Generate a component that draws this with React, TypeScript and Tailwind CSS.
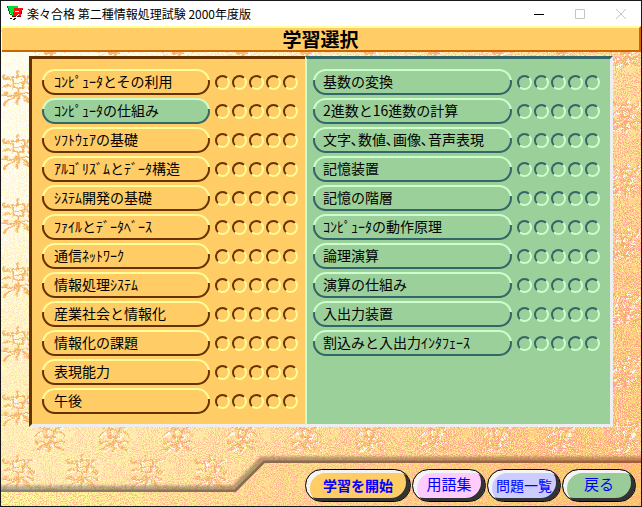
import React from 'react';
const chapters = ['ｺﾝﾋﾟｭｰﾀとその利用', 'ｺﾝﾋﾟｭｰﾀの仕組み', 'ｿﾌﾄｳｪｱの基礎', 'ｱﾙｺﾞﾘｽﾞﾑとﾃﾞｰﾀ構造', 'ｼｽﾃﾑ開発の基礎', 'ﾌｧｲﾙとﾃﾞｰﾀﾍﾞｰｽ', '通信ﾈｯﾄﾜｰｸ', '情報処理ｼｽﾃﾑ', '産業社会と情報化', '情報化の課題', '表現能力', '午後'];
const sections = ['基数の変換', '2進数と16進数の計算', '文字､数値､画像､音声表現', '記憶装置', '記憶の階層', 'ｺﾝﾋﾟｭｰﾀの動作原理', '論理演算', '演算の仕組み', '入出力装置', '割込みと入出力ｲﾝﾀﾌｪｰｽ'];
const pillStyles = {
  orange: '[background:linear-gradient(#ffcc66,#ffcc66)_padding-box,linear-gradient(#ffff99_42%,#663300_42%)_border-box]',
  green: '[background:linear-gradient(#9bd09b,#9bd09b)_padding-box,linear-gradient(#ccffcc_42%,#336666_42%)_border-box]'
};
const dotStyles = {
  orange: 'border-t-[#663300] border-l-[#663300] border-r-[#ffff99] border-b-[#ffff99]',
  green: 'border-t-[#336666] border-l-[#336666] border-r-[#ccffcc] border-b-[#ccffcc]'
};
const actions = [{
  label: '学習を開始',
  style: 'w-[106px] bg-[#ffcc66] font-bold text-sm'
}, {
  label: '用語集',
  style: 'w-[74px] bg-[#ffccff] text-[15px]'
}, {
  label: '問題一覧',
  style: 'w-[74px] bg-[#ccccff] text-sm'
}, {
  label: '戻る',
  style: 'w-[74px] bg-[#99cc99] text-[15px]'
}];
type Tone = 'orange' | 'green';
const Row: React.FC<{
  label: string;
  tone: Tone;
  selected?: boolean;
}> = ({
  label,
  tone,
  selected
}) => {
  return <li className="flex items-center gap-[5px]">
      <button type="button" aria-pressed={selected} className={`h-[26px] min-w-0 flex-1 whitespace-nowrap rounded-full border-2 border-transparent pb-[2px] text-left text-sm leading-5 text-black ${tone === 'green' ? 'pl-2' : 'pl-[10px]'} ${pillStyles[selected ? 'green' : tone]}`}>
        {label}
      </button>
      <span className="flex gap-[2px]">
        {[0, 1, 2, 3, 4].map(i => <span key={i} className={`size-[15px] rounded-full border-2 ${dotStyles[tone]}`} />)}
      </span>
    </li>;
};
const Wallpaper: React.FC = () => {
  return <svg className="absolute inset-0 h-full w-full" aria-hidden="true">
      <defs>
        <linearGradient id="paper" x1="0" y1="0" x2="1" y2="0.7">
          <stop offset="0" stopColor="#ffffff" />
          <stop offset="0.2" stopColor="#fffff4" />
          <stop offset="0.4" stopColor="#fff3c4" />
          <stop offset="0.7" stopColor="#ffe09c" />
          <stop offset="1" stopColor="#ffc878" />
        </linearGradient>
        <linearGradient id="fade" x1="0" y1="0" x2="1" y2="0.5">
          <stop offset="0" stopColor="#0c0c0c" />
          <stop offset="0.3" stopColor="#484848" />
          <stop offset="1" stopColor="#ffffff" />
        </linearGradient>
        <linearGradient id="yellowFade" x1="0" y1="0" x2="0.6" y2="1">
          <stop offset="0" stopColor="#505050" />
          <stop offset="0.5" stopColor="#c0c0c0" />
          <stop offset="1" stopColor="#ffffff" />
        </linearGradient>
        <mask id="toRight">
          <rect width="100%" height="100%" fill="url(#fade)" />
        </mask>
        <mask id="toBottom">
          <rect width="100%" height="100%" fill="url(#yellowFade)" />
        </mask>
        <filter id="yellowGrain" x="0" y="0" width="100%" height="100%" colorInterpolationFilters="sRGB">
          <feTurbulence type="fractalNoise" baseFrequency="0.97" numOctaves="2" seed="4" />
          <feColorMatrix values="0 0 0 0 1  0 0 0 0 1  0 0 0 0 0.6  0 0 20 0 -10" />
        </filter>
        <filter id="pinkGrain" x="0" y="0" width="100%" height="100%" colorInterpolationFilters="sRGB">
          <feTurbulence type="fractalNoise" baseFrequency="0.97" numOctaves="2" seed="11" />
          <feColorMatrix values="0 0 0 0 1  0 0 0 0 0.6  0 0 0 0 0.6  0 20 0 0 -10.6" />
        </filter>
        <filter id="brush" x="-10%" y="-10%" width="120%" height="120%">
          <feTurbulence type="fractalNoise" baseFrequency="0.14" numOctaves="2" seed="7" />
          <feDisplacementMap in="SourceGraphic" scale="9" xChannelSelector="R" yChannelSelector="G" />
        </filter>
        <pattern id="motif" width="64" height="64" patternUnits="userSpaceOnUse">
          <g filter="url(#brush)" fontFamily="'Noto Sans CJK JP', sans-serif" fontSize="35" textAnchor="middle">
            <text x="19" y="38" fill="#ffffff">楽</text>
            <text x="17" y="37" fill="#f4b468">楽</text>
            <g fill="#ffffff">
              <text x="51" y="66">楽</text>
              <text x="51" y="2">楽</text>
            </g>
            <g fill="#f4b468">
              <text x="49" y="65">楽</text>
              <text x="49" y="1">楽</text>
            </g>
          </g>
        </pattern>
      </defs>
      <rect width="100%" height="100%" fill="url(#paper)" />
      <rect width="100%" height="100%" fill="url(#motif)" />
      <g mask="url(#toBottom)">
        <rect width="100%" height="100%" filter="url(#yellowGrain)" opacity="0.65" />
      </g>
      <g mask="url(#toRight)">
        <rect width="100%" height="100%" filter="url(#pinkGrain)" opacity="0.85" />
      </g>
    </svg>;
};
// Raised shelf behind the action buttons
const Shelf: React.FC = () => {
  return <svg className="absolute bottom-0 left-0 h-[56px] w-full" aria-hidden="true">
      <defs>
        <linearGradient id="shelf" x1="0" y1="0" x2="642" y2="0" gradientUnits="userSpaceOnUse">
          <stop offset="0" stopColor="#ffff99" />
          <stop offset="0.4" stopColor="#ffdb90" />
          <stop offset="1" stopColor="#ffc060" />
        </linearGradient>
        <linearGradient id="shade" x1="0" y1="0" x2="642" y2="0" gradientUnits="userSpaceOnUse">
          <stop offset="0" stopColor="#8c8878" />
          <stop offset="0.4" stopColor="#8a6c50" />
          <stop offset="1" stopColor="#a06038" />
        </linearGradient>
        <filter id="soft" x="-5%" y="-50%" width="110%" height="200%">
          <feGaussianBlur stdDeviation="1" />
        </filter>
        <clipPath id="shelfShape">
          <path d="M-20 42H235L264 13H4000V70H-20Z" />
        </clipPath>
      </defs>
      <path d="M-20 39H233L261 10H4000" fill="none" stroke="url(#shade)" strokeWidth="7" opacity="0.6" filter="url(#soft)" />
      <path d="M-20 41H234L263 12H4000" fill="none" stroke="url(#shade)" strokeWidth="3" />
      <path d="M-20 42H235L264 13H4000V70H-20Z" fill="url(#shelf)" />
      <g clipPath="url(#shelfShape)">
        <rect width="100%" height="100%" filter="url(#yellowGrain)" opacity="0.4" />
        <rect width="100%" height="100%" filter="url(#pinkGrain)" opacity="0.6" />
      </g>
    </svg>;
};
const AppIcon: React.FC = () => {
  return <svg width="16" height="16" viewBox="0 0 16 16" shapeRendering="crispEdges" aria-hidden="true">
      <path d="M0 0h11v3H7v6H4V7H2V4H1V2H0z" fill="#00e030" />
      <path d="M0 0h1v2h1v3h1v3h2v1H3V8H2V5H1V2H0z" fill="#006622" />
      <path d="M7 2h9v2h-1v4h-1v3H5V9h1V6h1z" fill="#ff1010" />
      <path d="M5 10h9v1H5zM15 3h1v1h-1v4h-1V5h1z" fill="#880000" />
      <path d="M8 5h4v1H8zM11 8h1v1h-1v1h-1v1H9v1H8v-1h1v-1h1V9h1z" fill="#ffffff" />
      <path d="M3 12h2v1H3zM7 12h2v1H7zM6 13h2v1H6z" fill="#111111" />
    </svg>;
};
const App: React.FC = () => {
  return <div className="relative flex min-h-screen flex-col border border-[#18181c] font-['Noto_Sans_CJK_JP',sans-serif]">
      <Wallpaper />
      <Shelf />
      <header className="relative flex h-[25px] items-center justify-between bg-white pl-[6px]">
        <div className="flex items-center gap-1">
          <AppIcon />
          <span className="text-xs text-black">楽々合格 第二種情報処理試験 2000年度版</span>
        </div>
        <div className="flex h-full">
          <button type="button" aria-label="最小化" className="flex w-[41px] items-center justify-center">
            <svg width="10" height="10" stroke="#000000" fill="none"><path d="M0 5.5h10" /></svg>
          </button>
          <button type="button" aria-label="最大化" className="flex w-[41px] items-center justify-center">
            <svg width="10" height="10" stroke="#c4c4c4" fill="none"><path d="M.5.5h9v9h-9z" /></svg>
          </button>
          <button type="button" aria-label="閉じる" className="flex w-[41px] items-center justify-center">
            <svg width="10" height="10" stroke="#c4c4c4" fill="none"><path d="M0 0l10 10M10 0L0 10" /></svg>
          </button>
        </div>
      </header>
      <h1 className="relative ml-px flex h-[26px] items-center justify-center border-2 border-l-0 border-t-[#ffff99] border-r-[#cc6600] border-b-[#cc6600] bg-[#ffcc66] pb-[2px] text-[19px] font-bold leading-none text-black">
        学習選択
      </h1>
      <main className="relative mx-7 mt-1 flex">
        <section className="w-[276px] border-3 border-r-0 border-t-[#663300] border-l-[#663300] border-b-[#eeeeee] bg-[#ffcc66] py-[10px] pr-[7px] pl-[10px]">
          <ul className="flex flex-col gap-[3px]">
            {chapters.map((label, i) => <Row key={label} label={label} tone="orange" selected={i === 1} />)}
          </ul>
        </section>
        <section className="flex-1 border-3 border-l-2 border-t-[#336666] border-l-[#ccffcc] border-r-[#eeeeee] border-b-[#eeeeee] bg-[#9bd09b] py-[10px] pr-[10px] pl-[6px]">
          <ul className="flex flex-col gap-[3px]">
            {sections.map(label => <Row key={label} label={label} tone="green" />)}
          </ul>
        </section>
      </main>
      <footer className="relative mt-auto flex justify-end gap-px pr-[5px] pb-1">
        {actions.map(action => <button key={action.label} type="button" className={`h-[33px] whitespace-nowrap rounded-full border border-black pb-[2px] text-[#0000ff] shadow-[inset_4px_3px_0_#f4f4f4,inset_-4px_-3px_0_#333333] ${action.style}`}>
            {action.label}
          </button>)}
      </footer>
    </div>;
};
export default App;
